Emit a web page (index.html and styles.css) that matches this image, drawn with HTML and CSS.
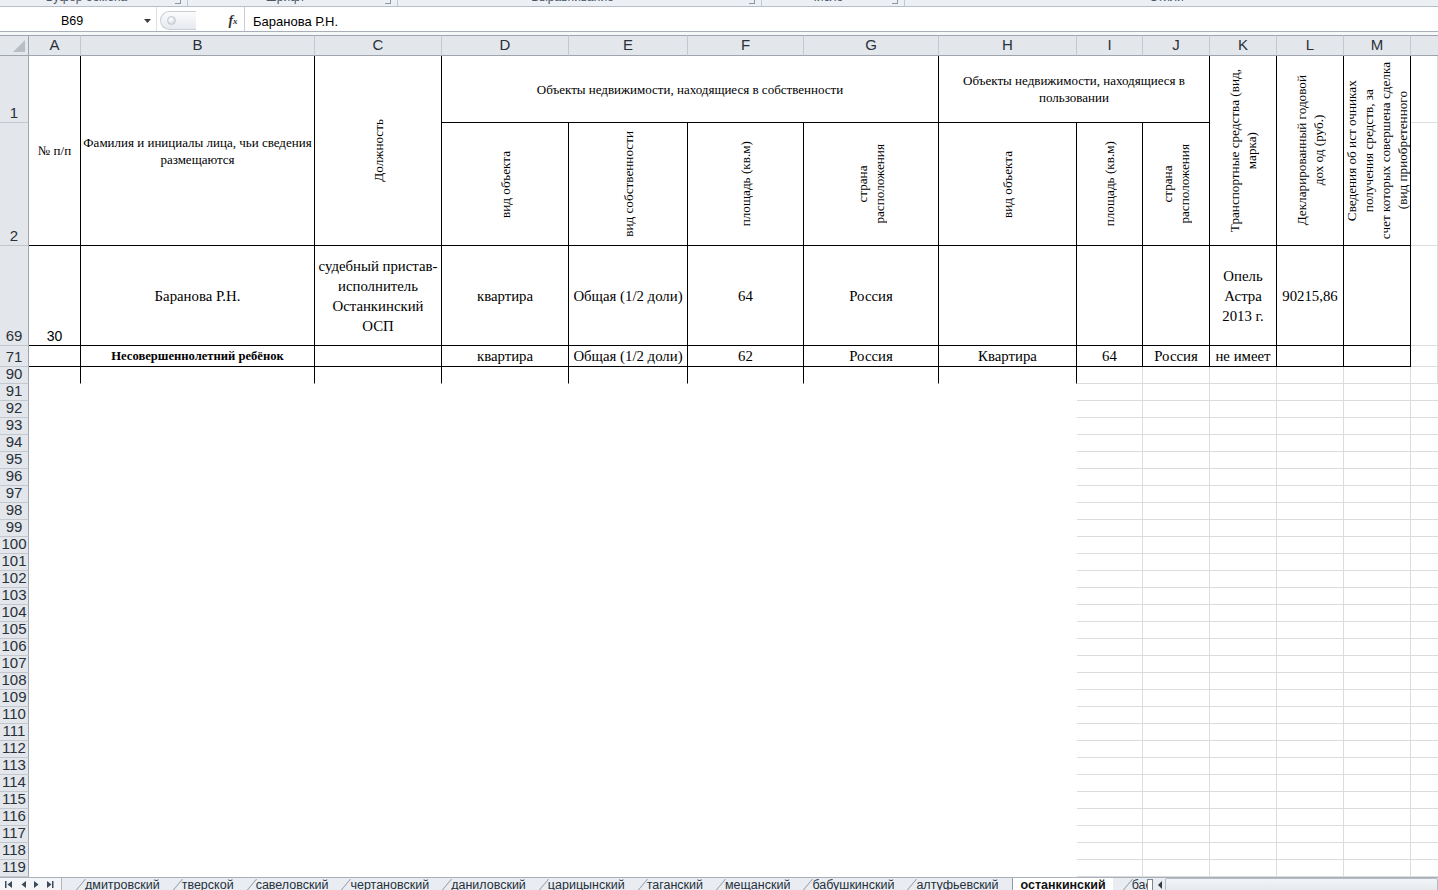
FILE: index.html
```html
<!DOCTYPE html>
<html lang="ru">
<head>
<meta charset="utf-8">
<title>останкинский</title>
<link rel="stylesheet" href="styles.css">
</head>
<body>
<div class="ribbon">
  <div class="rgroup g1"><span class="rlabel">Буфер обмена</span><i class="launch"></i></div>
  <div class="rgroup g2"><span class="rlabel">Шрифт</span><i class="launch"></i></div>
  <div class="rgroup g3"><span class="rlabel">Выравнивание</span><i class="launch"></i></div>
  <div class="rgroup g4"><span class="rlabel">Число</span><i class="launch"></i></div>
  <div class="rgroup g5"><span class="rlabel">Стили</span></div>
</div>

<div class="fbar">
  <div class="namebox">
    <span class="nb-text">B69</span>
    <svg class="nb-arrow" width="7" height="4" viewBox="0 0 7 4"><path d="M0 0h7L3.5 4z" fill="#3c3c3c"/></svg>
  </div>
  <div class="grip"><span class="grip-dot"></span></div>
  <div class="fxbtn"><i>f</i><sub>x</sub></div>
  <div class="formula">Баранова Р.Н.</div>
</div>
<div class="fgap"></div>

<div class="sheet">
  <!-- column headers -->
  <div class="corner"><svg width="12" height="12" viewBox="0 0 12 12"><path d="M12 0V12H0z" fill="#b9bec6"/></svg></div>
  <div class="ch">A</div>
  <div class="ch">B</div>
  <div class="ch">C</div>
  <div class="ch">D</div>
  <div class="ch">E</div>
  <div class="ch">F</div>
  <div class="ch">G</div>
  <div class="ch">H</div>
  <div class="ch">I</div>
  <div class="ch">J</div>
  <div class="ch">K</div>
  <div class="ch">L</div>
  <div class="ch">M</div>
  <div class="ch last"></div>

  <!-- row 1 -->
  <div class="rh">1</div>
  <div class="c k r2 hd">№ п/п</div>
  <div class="c k r2 hd">Фамилия и инициалы лица, чьи сведения<br>размещаются</div>
  <div class="c k r2"><span class="rot">Должность</span></div>
  <div class="c k s4 hd">Объекты недвижимости, находящиеся в собственности</div>
  <div class="c k s3 hd">Объекты недвижимости, находящиеся в<br>пользовании</div>
  <div class="c k r2"><span class="rot">Транспортные средства (вид,<br>марка)</span></div>
  <div class="c k r2"><span class="rot">Декларированный годовой<br>дох од (руб.)</span></div>
  <div class="c k r2"><span class="rot">Сведения об ист очниках<br>получения средств, за<br>счет которых совершена сделка<br>(вид приобретенного</span></div>
  <div class="c"></div>

  <!-- row 2 -->
  <div class="rh tall">2</div>
  <div class="c k"><span class="rot">вид объекта</span></div>
  <div class="c k"><span class="rot">вид собственности</span></div>
  <div class="c k"><span class="rot">площадь (кв.м)</span></div>
  <div class="c k"><span class="rot">страна<br>расположения</span></div>
  <div class="c k"><span class="rot">вид объекта</span></div>
  <div class="c k"><span class="rot">площадь (кв.м)</span></div>
  <div class="c k"><span class="rot">страна<br>расположения</span></div>
  <div class="c"></div>

  <!-- row 69 -->
  <div class="rh">69</div>
  <div class="c k num">30</div>
  <div class="c k dt">Баранова Р.Н.</div>
  <div class="c k dt">судебный пристав-<br>исполнитель<br>Останкинский<br>ОСП</div>
  <div class="c k dt">квартира</div>
  <div class="c k dt">Общая (1/2 доли)</div>
  <div class="c k dt">64</div>
  <div class="c k dt">Россия</div>
  <div class="c k"></div>
  <div class="c k"></div>
  <div class="c k"></div>
  <div class="c k dt">Опель<br>Астра<br>2013 г.</div>
  <div class="c k dt">90215,86</div>
  <div class="c k"></div>
  <div class="c"></div>

  <!-- row 71 -->
  <div class="rh">71</div>
  <div class="c k"></div>
  <div class="c k sm">Несовершеннолетний ребёнок</div>
  <div class="c k"></div>
  <div class="c k dt">квартира</div>
  <div class="c k dt">Общая (1/2 доли)</div>
  <div class="c k dt">62</div>
  <div class="c k dt">Россия</div>
  <div class="c k dt">Квартира</div>
  <div class="c k dt">64</div>
  <div class="c k dt">Россия</div>
  <div class="c k dt">не имеет</div>
  <div class="c k"></div>
  <div class="c k"></div>
  <div class="c"></div>

  <!-- row 90 -->
  <div class="rh">90</div>
  <div class="c open"></div>
  <div class="c open"></div>
  <div class="c open"></div>
  <div class="c open"></div>
  <div class="c open"></div>
  <div class="c open"></div>
  <div class="c open"></div>
  <div class="c open"></div>
  <div class="c"></div>
  <div class="c"></div>
  <div class="c"></div>
  <div class="c"></div>
  <div class="c"></div>
  <div class="c"></div>

  <!-- rows 91-119 -->
  <div class="rh-stack">
    <div class="rhn">91</div><div class="rhn">92</div><div class="rhn">93</div><div class="rhn">94</div>
    <div class="rhn">95</div><div class="rhn">96</div><div class="rhn">97</div><div class="rhn">98</div>
    <div class="rhn">99</div><div class="rhn">100</div><div class="rhn">101</div><div class="rhn">102</div>
    <div class="rhn">103</div><div class="rhn">104</div><div class="rhn">105</div><div class="rhn">106</div>
    <div class="rhn">107</div><div class="rhn">108</div><div class="rhn">109</div><div class="rhn">110</div>
    <div class="rhn">111</div><div class="rhn">112</div><div class="rhn">113</div><div class="rhn">114</div>
    <div class="rhn">115</div><div class="rhn">116</div><div class="rhn">117</div><div class="rhn">118</div>
    <div class="rhn">119</div>
  </div>
  <div class="blank"></div>
  <div class="gcol"></div>
  <div class="gcol"></div>
  <div class="gcol"></div>
  <div class="gcol"></div>
  <div class="gcol"></div>
  <div class="gcol end"></div>
</div>

<div class="tabbar">
  <div class="tabnav">
    <svg width="56" height="14" viewBox="0 0 56 14">
      <rect x="5" y="3" width="1.5" height="7" fill="#3d4a5a"/>
      <path d="M12 3v7L7.5 6.5z" fill="#3d4a5a"/>
      <path d="M26 3v7L21.5 6.5z" fill="#3d4a5a"/>
      <path d="M34 3v7L38.5 6.5z" fill="#3d4a5a"/>
      <path d="M47 3v7L51.5 6.5z" fill="#3d4a5a"/>
      <rect x="52" y="3" width="1.5" height="7" fill="#3d4a5a"/>
    </svg>
  </div>
  <div class="tabs">
    <span class="tab">дмитровский</span>
    <span class="tab">тверской</span>
    <span class="tab">савеловский</span>
    <span class="tab">чертановский</span>
    <span class="tab">даниловский</span>
    <span class="tab">царицынский</span>
    <span class="tab">таганский</span>
    <span class="tab">мещанский</span>
    <span class="tab">бабушкинский</span>
    <span class="tab">алтуфьевский</span>
    <span class="tab active">останкинский</span>
    <span class="tab">басманный</span>
  </div>
  <div class="splitbox"></div>
  <div class="hscroll">
    <svg class="sc-left" width="10" height="14" viewBox="0 0 10 14"><path d="M7 3v8L3 7z" fill="#2f3a48"/></svg>
    <div class="track"></div>
  </div>
</div>
</body>
</html>
```

FILE: styles.css
```css
* {
  box-sizing: border-box;
}

html,
body {
  margin: 0;
  padding: 0;
}

body {
  width: 1438px;
  height: 890px;
  overflow: hidden;
  background: #fff;
  font-family: "Liberation Sans", Arial, sans-serif;
  color: #000;
}

/* ---------- ribbon strip (group captions, cut off at the top) ---------- */
.ribbon {
  height: 7px;
  display: flex;
  background: #eceff3;
  border-bottom: 1px solid #b8bec7;
  overflow: hidden;
}

.rgroup {
  display: flex;
  align-items: flex-start;
  border-right: 1px solid #c3c8d0;
  height: 6px;
  overflow: hidden;
}

.g1 { width: 188px; }
.g2 { width: 210px; }
.g3 { width: 364px; }
.g4 { width: 143px; }
.g5 { flex: 1; border-right: 0; padding-right: 10px; }

.rlabel {
  flex: 1;
  text-align: center;
  font-size: 12px;
  line-height: 14px;
  margin-top: -10px;
  color: #4a5566;
}

.launch {
  width: 6px;
  height: 4px;
  margin: 0 6px 0 2px;
  border-right: 1px solid #8d96a3;
  border-bottom: 1px solid #8d96a3;
}

/* ---------- formula bar ---------- */
.fbar {
  height: 25px;
  display: flex;
  align-items: stretch;
  background: #fff;
  border-bottom: 1px solid #a9afb8;
}

.namebox {
  width: 157px;
  display: flex;
  align-items: center;
  padding-top: 4px;
  border-right: 1px solid #dde1e6;
}

.nb-text {
  flex: 1;
  text-align: center;
  font-size: 12.5px;
  padding-left: 2px;
}

.nb-arrow {
  margin: 0 5px 0 2px;
}

.grip {
  width: 36px;
  margin: 4px 0 1px 3px;
  border: 1px solid #c9ced5;
  border-right: 0;
  border-radius: 10px 0 0 10px;
  background: linear-gradient(#fbfcfd, #e6e9ee);
  display: flex;
  align-items: center;
  padding-left: 6px;
}

.grip-dot {
  width: 9px;
  height: 9px;
  border-radius: 50%;
  background: radial-gradient(circle at 40% 35%, #ffffff, #c9ced6);
  border: 1px solid #c4c9d0;
}

.fxbtn {
  width: 49px;
  display: flex;
  align-items: center;
  justify-content: center;
  padding-left: 26px;
  padding-top: 3px;
  border-right: 1px solid #c9ced5;
  font-family: "Liberation Serif", "Times New Roman", serif;
  color: #333;
  font-size: 14px;
  font-weight: bold;
}

.fxbtn i {
  font-style: italic;
}

.fxbtn sub {
  font-size: 9px;
  font-style: italic;
  vertical-align: -1px;
}

.formula {
  flex: 1;
  display: flex;
  align-items: center;
  padding-left: 8px;
  padding-top: 4px;
  font-size: 13px;
}

.fgap {
  height: 3px;
  background: #f6f7f9;
}

/* ---------- worksheet grid ---------- */
.sheet {
  display: grid;
  grid-template-columns: 29px 52px 234px 127px 127px 119px 116px 135px 138px 66px 67px 67px 67px 67px 1fr;
  grid-template-rows: 21px 67px 123px 100px 21px 17px 493px;
}

.corner {
  background: #e3e6ea;
  border-top: 1px solid #9ea5ae;
  border-bottom: 1px solid #9ea5ae;
  border-right: 1px solid #9ea5ae;
  display: flex;
  align-items: flex-end;
  justify-content: flex-end;
  padding: 0 3px 3px 0;
}

.ch {
  background: #e3e6ea;
  border-top: 1px solid #9ea5ae;
  border-bottom: 1px solid #9ea5ae;
  border-right: 1px solid #c3c8ce;
  display: flex;
  align-items: center;
  justify-content: center;
  padding-bottom: 2px;
  font-size: 15px;
  color: #29313b;
}

.ch.last {
  border-right: 0;
}

.rh {
  background: #e3e6ea;
  border-right: 1px solid #9ea5ae;
  border-bottom: 1px solid #c3c8ce;
  display: flex;
  align-items: flex-end;
  justify-content: center;
  padding-bottom: 1px;
  font-size: 15px;
  line-height: 17px;
  color: #29313b;
}

.rh-stack {
  display: flex;
  flex-direction: column;
}

.rhn {
  height: 17px;
  background: #e3e6ea;
  border-right: 1px solid #9ea5ae;
  border-bottom: 1px solid #c3c8ce;
  text-align: center;
  font-size: 15px;
  line-height: 14px;
  color: #29313b;
}

.c {
  border-right: 1px solid #dadcdd;
  border-bottom: 1px solid #dadcdd;
  display: flex;
  align-items: center;
  justify-content: center;
  text-align: center;
  overflow: hidden;
  font-family: "Liberation Serif", "Times New Roman", serif;
}

.c.k {
  border-color: #000;
}

.c.open {
  border-right-color: #000;
  border-bottom-color: transparent;
}

.r2 { grid-row: span 2; }
.s4 { grid-column: span 4; }
.s3 { grid-column: span 3; }

.hd {
  font-size: 13px;
  line-height: 17px;
}

.rot {
  writing-mode: vertical-rl;
  transform: rotate(180deg);
  white-space: nowrap;
  text-align: center;
  font-size: 13.2px;
  line-height: 17px;
}

.dt {
  font-size: 14.8px;
  line-height: 20px;
}

.sm {
  font-size: 12.6px;
  font-weight: bold;
  line-height: 20px;
}

.num {
  align-items: flex-end;
  font-family: "Liberation Sans", Arial, sans-serif;
  font-size: 14px;
  line-height: 17px;
  padding-bottom: 0;
}

.blank {
  grid-column: span 8;
  background: #fff;
}

.gcol {
  border-right: 1px solid #dadcdd;
  background: repeating-linear-gradient(to bottom, transparent 0 16px, #dadcdd 16px 17px);
}

.gcol.end {
  border-right: 0;
}

/* ---------- sheet tabs & scroll bar ---------- */
.tabbar {
  height: 20px;
  display: flex;
  align-items: stretch;
  background: #e9edf2;
  border-top: 1px solid #a9b0ba;
}

.tabnav {
  width: 62px;
  display: flex;
  align-items: flex-start;
  border-right: 1px solid #b1b8c2;
  background: #f3f5f8;
}

.tabs {
  width: 1085px;
  display: flex;
  overflow: hidden;
  white-space: nowrap;
}

.tab {
  position: relative;
  padding: 0 3px 0 19px;
  font-size: 12.5px;
  line-height: 14px;
  color: #26303c;
}

.tab::before {
  content: "";
  position: absolute;
  left: 4px;
  top: 1px;
  width: 1px;
  height: 18px;
  background: #8e98a6;
  transform: skewX(-40deg);
  transform-origin: bottom left;
}

.tab:first-child {
  padding-left: 23px;
}

.tab:first-child::before {
  left: 8px;
}

.tab.active {
  background: #fff;
  font-weight: bold;
  color: #111;
  padding: 0 7px 0 8px;
  margin-left: 10px;
  border-left: 1px solid #8e98a6;
  z-index: 1;
}

.tab.active::before {
  display: none;
}

.splitbox {
  width: 6px;
  margin: 1px 2px 5px 0;
  border: 1px solid #7c8694;
  background: #fff;
}

.hscroll {
  flex: 1;
  display: flex;
  align-items: flex-start;
}

.sc-left {
  flex: none;
}

.track {
  flex: 1;
  height: 18px;
  border: 1px solid #b4bcc7;
  border-radius: 2px;
  background: linear-gradient(#f2f4f7, #dfe4ea);
}
```
